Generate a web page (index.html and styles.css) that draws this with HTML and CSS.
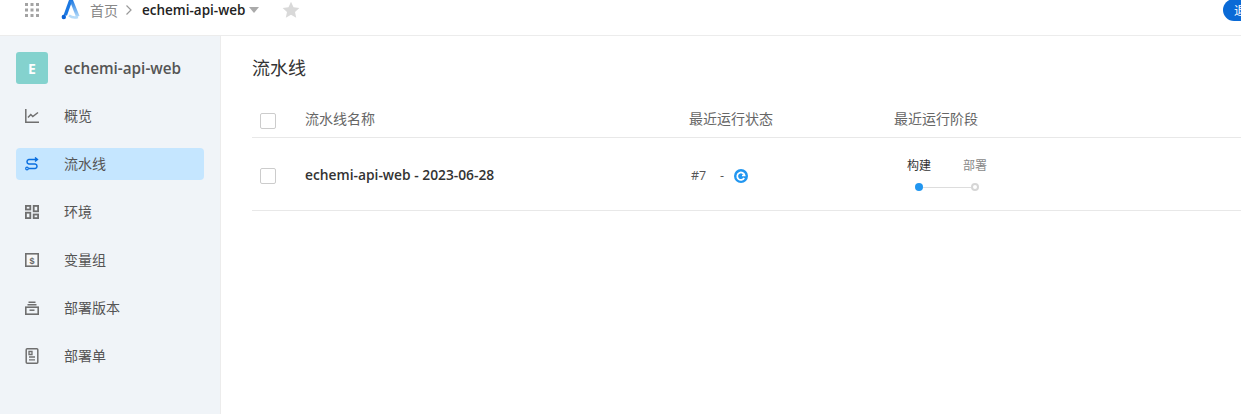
FILE: index.html
```html
<!DOCTYPE html>
<html lang="zh-CN">
<head>
<meta charset="UTF-8" />
<meta name="viewport" content="width=device-width, initial-scale=1" />
<title>流水线 - echemi-api-web</title>
<link rel="stylesheet" href="styles.css">
</head>
<body>
  <header class="topbar">
    <svg class="apps" width="14" height="14" viewBox="0 0 14 14" aria-hidden="true">
      <g fill="#a3a3a3">
        <rect x="0" y="0" width="3" height="3"/><rect x="5.5" y="0" width="3" height="3"/><rect x="11" y="0" width="3" height="3"/>
        <rect x="0" y="5.5" width="3" height="3"/><rect x="5.5" y="5.5" width="3" height="3"/><rect x="11" y="5.5" width="3" height="3"/>
        <rect x="0" y="11" width="3" height="3"/><rect x="5.5" y="11" width="3" height="3"/><rect x="11" y="11" width="3" height="3"/>
      </g>
    </svg>
    <svg class="logo" width="20" height="20" viewBox="0 0 20 20" aria-hidden="true">
      <defs>
        <linearGradient id="logoRight" x1="0" y1="0" x2="0" y2="1">
          <stop offset="0" stop-color="#1b78e2"/>
          <stop offset="1" stop-color="#b5dbf9"/>
        </linearGradient>
      </defs>
      <path d="M2.4 15.5 L8 0 H11.5 L6 15.5 Z" fill="#1b78e2"/>
      <path d="M8.5 0 H12 L18.5 16 L15 17 Z" fill="url(#logoRight)"/>
      <path d="M8 15.5 Q12 18.5 17 17" fill="none" stroke="#b5dbf9" stroke-width="2.4"/>
      <circle cx="2.8" cy="17" r="2.2" fill="#0a63d6"/>
    </svg>
    <a class="crumb" href="#">首页</a>
    <svg class="crumb-sep" width="8" height="12" viewBox="0 0 8 12" aria-hidden="true">
      <path d="M1.5 1.5 L6 6 L1.5 10.5" fill="none" stroke="#999" stroke-width="1.2"/>
    </svg>
    <strong class="project">echemi-api-web</strong>
    <span class="caret"></span>
    <svg class="star" width="18" height="18" viewBox="0 0 18 18" aria-hidden="true">
      <path d="M9 .8 L11.5 6.2 L17.4 6.9 L13 10.9 L14.2 16.8 L9 13.8 L3.8 16.8 L5 10.9 L.6 6.9 L6.5 6.2 Z" fill="#d9d9d9"/>
    </svg>
    <button class="upgrade" type="button">退出</button>
  </header>

  <div class="layout">
    <aside class="sidebar">
      <div class="app-head">
        <span class="app-badge">E</span>
        <span class="app-name">echemi-api-web</span>
      </div>
      <nav class="nav">
        <a class="nav-item" href="#">
          <svg width="14" height="14" viewBox="0 0 14 14" aria-hidden="true"><path d="M.8 0 V13.2 H14 M3 8.5 L5.8 5.5 L7.8 7.5 L13 3.5" fill="none" stroke="#6f6f6f" stroke-width="1.5"/></svg>
          <span>概览</span>
        </a>
        <a class="nav-item active" href="#">
          <svg width="14" height="14" viewBox="0 0 14 14" aria-hidden="true"><path d="M12 2.5 H3.8 A2.3 2.3 0 0 0 3.8 7 H10.2 A2.3 2.3 0 0 1 10.2 11.5 H3.5 M10 .5 L12.4 2.5 L10 4.5" fill="none" stroke="#0a6fe0" stroke-width="1.5"/><circle cx="2" cy="11.5" r="1.3" fill="none" stroke="#0a6fe0" stroke-width="1.2"/></svg>
          <span>流水线</span>
        </a>
        <a class="nav-item" href="#">
          <svg width="14" height="14" viewBox="0 0 14 14" aria-hidden="true"><g fill="none" stroke="#6f6f6f" stroke-width="1.8"><rect x=".9" y=".9" width="4.4" height="3.6"/><rect x="8.7" y=".9" width="4.4" height="5.4"/><rect x=".9" y="7.7" width="4.4" height="5.4"/><rect x="8.7" y="9.5" width="4.4" height="3.6"/></g></svg>
          <span>环境</span>
        </a>
        <a class="nav-item" href="#">
          <svg width="14" height="14" viewBox="0 0 14 14" aria-hidden="true"><rect x=".8" y=".8" width="12.4" height="12.4" fill="#f7f7f7" stroke="#6f6f6f" stroke-width="1.6"/><text class="dollar" x="7" y="10.5">$</text></svg>
          <span>变量组</span>
        </a>
        <a class="nav-item" href="#">
          <svg width="14" height="14" viewBox="0 0 14 14" aria-hidden="true"><path d="M3.5 1.2 H10.5 M2.5 3.8 H11.5" fill="none" stroke="#6f6f6f" stroke-width="1.5"/><rect x=".8" y="6.2" width="12.4" height="7" fill="none" stroke="#6f6f6f" stroke-width="1.6"/><path d="M4.5 9.2 H9.5" stroke="#6f6f6f" stroke-width="1.5"/></svg>
          <span>部署版本</span>
        </a>
        <a class="nav-item" href="#">
          <svg width="14" height="16" viewBox="0 0 14 16" aria-hidden="true"><rect x="1.2" y=".8" width="11.6" height="14.4" rx="1" fill="none" stroke="#6f6f6f" stroke-width="1.5"/><path d="M4 3.5 H7 V6.5 H4 Z M4 9 H10 M4 11.8 H10" fill="none" stroke="#6f6f6f" stroke-width="1.3"/></svg>
          <span>部署单</span>
        </a>
      </nav>
    </aside>

    <main class="content">
      <h1 class="page-title">流水线</h1>
      <div class="table">
        <div class="row row-head">
          <span class="cell-check"><span class="checkbox"></span></span>
          <span class="cell-name">流水线名称</span>
          <span class="cell-status">最近运行状态</span>
          <span class="cell-stage">最近运行阶段</span>
        </div>
        <div class="row row-body">
          <span class="cell-check"><span class="checkbox"></span></span>
          <span class="cell-name pipeline-name">echemi-api-web - 2023-06-28</span>
          <span class="cell-status status">
            <span class="run-no">#7</span>
            <span class="run-dash">-</span>
            <svg class="run-icon" width="14" height="14" viewBox="0 0 14 14" aria-hidden="true">
              <circle cx="7" cy="7" r="7" fill="#2196f0"/>
              <path d="M10.2 9 A3.7 3.7 0 1 1 10.6 6.5 L8 6.5" fill="none" stroke="#fff" stroke-width="1.7"/>
            </svg>
          </span>
          <span class="cell-stage">
            <div class="stages">
              <div class="stage-labels">
                <span class="stage-on">构建</span>
                <span class="stage-off">部署</span>
              </div>
              <div class="stage-track">
                <span class="dot-on"></span>
                <span class="stage-line"></span>
                <span class="dot-off"></span>
              </div>
            </div>
          </span>
        </div>
      </div>
    </main>
  </div>
</body>
</html>
```

FILE: styles.css
```css
:root {
  --color-primary: #0a6fe0;
  --color-text: #333;
  --color-muted: #666;
  --color-border: #e8e8e8;
  --sidebar-bg: #f0f4f8;
  --font-family: 'Open Sans', 'Noto Sans CJK SC', sans-serif;
}
* {
  box-sizing: border-box;
}
html,
body {
  height: 100%;
}
body {
  margin: 0;
  overflow: hidden;
  font-family: var(--font-family);
  font-size: 14px;
  color: var(--color-text);
  background: #fff;
}
a {
  color: inherit;
  text-decoration: none;
}

/* Top bar */
.topbar {
  display: flex;
  align-items: center;
  height: 36px;
  padding: 0 0 15px 25px;
  border-bottom: 1px solid #ececec;
}
.logo {
  margin-left: 22px;
}
.crumb {
  margin-left: 9px;
  color: #888;
}
.crumb-sep {
  margin-left: 7px;
}
.project {
  margin-left: 9px;
  font-size: 13.5px;
  font-weight: 600;
  color: #222;
}
.caret {
  margin-left: 4px;
  border-left: 5.5px solid transparent;
  border-right: 5.5px solid transparent;
  border-top: 6px solid #aaa;
}
.star {
  margin-left: 23px;
}
.upgrade {
  flex: none;
  margin-left: auto;
  margin-right: -32px;
  width: 50px;
  height: 22px;
  padding: 0 0 0 11px;
  border: none;
  border-radius: 11px;
  background: #0a6ad6;
  color: #fff;
  font-family: var(--font-family);
  font-size: 12px;
  text-align: left;
}

/* Sidebar */
.layout {
  display: flex;
  height: calc(100% - 36px);
}
.sidebar {
  flex: none;
  width: 221px;
  padding: 16px 16px 0;
  background: var(--sidebar-bg);
  border-right: 1px solid #ececec;
}
.app-head {
  display: flex;
  align-items: center;
  gap: 16px;
  height: 32px;
}
.app-badge {
  display: flex;
  align-items: center;
  justify-content: center;
  width: 32px;
  height: 32px;
  border-radius: 3px;
  background: #84d2ce;
  color: #fff;
  font-weight: 700;
  font-size: 14px;
}
.app-name {
  font-size: 15.3px;
  font-weight: 600;
  color: #555;
}
.nav {
  display: flex;
  flex-direction: column;
  gap: 16px;
  margin-top: 16px;
}
.nav-item {
  display: flex;
  align-items: center;
  gap: 25px;
  height: 32px;
  padding-left: 9px;
  border-radius: 4px;
  color: #555;
}
.nav-item span {
  margin-bottom: 2px;
}
.nav-item.active {
  background: #c5e6ff;
}
.dollar {
  font-family: 'Liberation Sans', sans-serif;
  font-size: 9px;
  font-weight: 700;
  text-anchor: middle;
  fill: #666;
}

/* Content */
.content {
  flex: 1;
  min-width: 0;
  padding: 20px 0 0 31px;
}
.page-title {
  margin: 0;
  font-size: 18px;
  font-weight: 400;
  line-height: 24px;
  color: #333;
}
.table {
  margin-top: 18px;
}
.row {
  display: flex;
  align-items: center;
  border-bottom: 1px solid var(--color-border);
}
.row-head {
  height: 40px;
  color: var(--color-muted);
}
.row-body {
  height: 73px;
  padding-top: 2px;
}
.cell-check {
  display: flex;
  flex: none;
  width: 53px;
  padding-left: 8px;
}
.checkbox {
  width: 16px;
  height: 16px;
  margin-top: 2px;
  border: 1px solid #ccc;
  border-radius: 2px;
  background: #fff;
}
.row-head .checkbox {
  margin-top: 6px;
}
.cell-name {
  flex: none;
  width: 384px;
}
.pipeline-name {
  margin-bottom: 2px;
  font-size: 13.8px;
  font-weight: 600;
  color: #333;
}
.cell-status {
  flex: none;
  width: 205px;
}
.status {
  display: flex;
  align-items: center;
  padding-left: 2px;
  color: #555;
  font-size: 12.5px;
}
.run-no {
  width: 29px;
}
.run-dash {
  width: 14px;
}
.run-icon {
  margin-top: 2px;
}
.stages {
  display: flex;
  flex-direction: column;
  width: 96px;
  margin-top: -3px;
}
.stage-labels {
  display: flex;
  justify-content: space-between;
  padding: 0 3px 0 13px;
  font-size: 12px;
}
.stage-on {
  color: #333;
}
.stage-off {
  color: #888;
}
.stage-track {
  display: flex;
  align-items: center;
  margin: 9px 0 0 21px;
}
.dot-on {
  width: 8px;
  height: 8px;
  border-radius: 50%;
  background: #2196f0;
}
.stage-line {
  width: 48px;
  height: 1px;
  background: #ddd;
}
.dot-off {
  width: 8px;
  height: 8px;
  border-radius: 50%;
  border: 2px solid #d6d6d6;
}
```
